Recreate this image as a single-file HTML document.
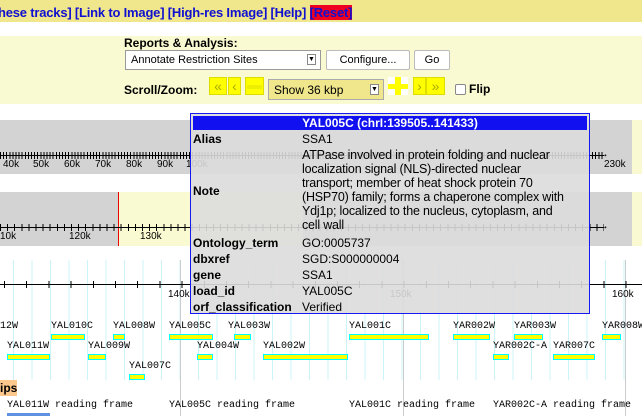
<!DOCTYPE html>
<html><head><meta charset="utf-8"><style>
*{margin:0;padding:0;box-sizing:border-box}
body{width:642px;height:416px;overflow:hidden;position:relative;background:#fff;font-family:"Liberation Sans",sans-serif;font-size:12px}
.a{position:absolute;white-space:nowrap}
.m{font-family:"Liberation Mono",monospace;font-size:10px;color:#000}
.bar{position:absolute;height:6px;background:#ff0;border:1px solid #0ff}
.btn{position:absolute;background:#ff0;border:1px solid #dd0;color:#cc0;font-size:14px;text-align:center;line-height:20px}
</style></head><body>
<div class="a" style="left:0;top:0;width:642px;height:22px;background:#f0e68c"></div>
<div class="a" style="left:-2px;top:5px;color:#1010d0;font-size:13px;font-weight:bold;letter-spacing:-0.2px">hese tracks] [Link to Image] [High-res Image] [Help] <span style="background:#f00020;color:#1010d0">[Reset]</span></div>
<div class="a" style="left:0;top:36px;width:642px;height:68px;background:#fafad2"></div>
<div class="a" style="left:124px;top:36px;font-weight:bold;font-size:12px">Reports &amp; Analysis:</div>
<div class="a" style="left:125px;top:50px;width:196px;height:20px;background:#fff;border:1px solid #999;font-size:11px;padding:3px 5px">Annotate Restriction Sites<span style="position:absolute;right:4px;top:3px;width:9px;height:11px;border:1px solid #888;font-size:7px;line-height:10px;text-align:center">▼</span></div>
<div class="a" style="left:326px;top:50px;width:84px;height:20px;background:#fff;border:1px solid #bbb;border-radius:2px;font-size:11px;text-align:center;line-height:18px">Configure...</div>
<div class="a" style="left:414px;top:50px;width:36px;height:20px;background:#fff;border:1px solid #bbb;border-radius:2px;font-size:11px;text-align:center;line-height:18px">Go</div>
<div class="a" style="left:124px;top:83px;font-weight:bold;font-size:12px">Scroll/Zoom:</div>
<div class="btn" style="left:209px;top:77px;width:18px;height:18px;color:#aa0;line-height:16px">«</div>
<div class="btn" style="left:228px;top:77px;width:13px;height:18px;color:#aa0;line-height:16px">‹</div>
<div class="btn" style="left:245px;top:77px;width:19px;height:18px"><div style="margin:7px 1px 0;height:4px;background:#ee0"></div></div>
<div class="a" style="left:268px;top:79px;width:116px;height:21px;background:#f0e68c;border:1px solid #aaa;font-size:12px;padding:3px 5px">Show 36 kbp<span style="position:absolute;right:4px;top:4px;width:9px;height:11px;border:1px solid #888;background:#fff;font-size:7px;line-height:10px;text-align:center">▼</span></div>
<div class="btn" style="left:388px;top:77px;width:20px;height:18px;background:#fff;border:none"><div style="position:absolute;left:0;top:7px;width:20px;height:5px;background:#ff0"></div><div style="position:absolute;left:7px;top:0;width:6px;height:18px;background:#ff0"></div></div>
<div class="btn" style="left:413px;top:77px;width:13px;height:18px;color:#aa0;line-height:16px">›</div>
<div class="btn" style="left:426px;top:77px;width:19px;height:18px;color:#aa0;line-height:16px">»</div>
<div class="a" style="left:455px;top:84px;width:11px;height:11px;border:1px solid #888;border-radius:2px;background:#fff"></div>
<div class="a" style="left:469px;top:82px;font-weight:bold;font-size:12px">Flip</div>

<div class="a" style="left:0;top:120px;width:632px;height:54px;background:#d3d3d3"></div>
<div class="a" style="left:632px;top:120px;width:10px;height:54px;background:#fafad2"></div>
<div class="a" style="left:0;top:155px;width:604px;height:1px;background:#000"></div>
<div class="a" style="left:0;top:152px;width:604px;height:7px;background:repeating-linear-gradient(90deg,#000 0 1px,transparent 1px 3.1px)"></div>
<div class="a m" style="left:600px;top:149px;font-size:11px">→</div>
<div class="a" style="left:3px;top:159px;font-size:10px">40k</div>
<div class="a" style="left:33px;top:159px;font-size:10px">50k</div>
<div class="a" style="left:64px;top:159px;font-size:10px">60k</div>
<div class="a" style="left:95px;top:159px;font-size:10px">70k</div>
<div class="a" style="left:126px;top:159px;font-size:10px">80k</div>
<div class="a" style="left:157px;top:159px;font-size:10px">90k</div>
<div class="a" style="left:186px;top:159px;font-size:10px">100k</div>
<div class="a" style="left:604px;top:159px;font-size:10px">230k</div>

<div class="a" style="left:0;top:192px;width:632px;height:54px;background:#d3d3d3"></div>
<div class="a" style="left:118px;top:192px;width:185px;height:54px;background:#fafad2"></div>
<div class="a" style="left:632px;top:192px;width:10px;height:54px;background:#fafad2"></div>
<div class="a" style="left:118px;top:192px;width:1px;height:54px;background:#e00"></div>
<div class="a" style="left:0;top:227px;width:604px;height:1px;background:#000"></div>
<div class="a" style="left:0;top:224px;width:604px;height:7px;background:repeating-linear-gradient(90deg,#000 0 1px,transparent 1px 7.1px)"></div>
<div class="a m" style="left:600px;top:221px;font-size:11px">→</div>
<div class="a" style="left:0;top:231px;font-size:10px">10k</div>
<div class="a" style="left:69px;top:231px;font-size:10px">120k</div>
<div class="a" style="left:140px;top:231px;font-size:10px">130k</div>

<div class="a" style="left:0;top:260px;width:642px;height:120px;background:repeating-linear-gradient(90deg,transparent 0 13px,#ccf4f8 13px 14px,transparent 14px 18.5px)"></div>
<div class="a" style="left:180px;top:260px;width:1px;height:156px;background:#ccc"></div>
<div class="a" style="left:403px;top:260px;width:1px;height:156px;background:#ccc"></div>
<div class="a" style="left:625px;top:260px;width:1px;height:156px;background:#ccc"></div>
<div class="a" style="left:0;top:284px;width:642px;height:1px;background:#000"></div>
<div class="a" style="left:0;top:281px;width:642px;height:7px;background:repeating-linear-gradient(90deg,transparent 0 4px,#000 4px 5px,transparent 5px 22.2px)"></div>
<div class="a" style="left:168px;top:289px;font-size:10px">140k</div>
<div class="a" style="left:390px;top:289px;font-size:10px">150k</div>
<div class="a" style="left:612px;top:289px;font-size:10px">160k</div>

<div class="a m" style="left:0;top:321px">12W</div>
<div class="a m" style="left:51px;top:321px">YAL010C</div><div class="bar" style="left:51px;top:334px;width:34px"></div>
<div class="a m" style="left:113px;top:321px">YAL008W</div><div class="bar" style="left:113px;top:334px;width:12px"></div>
<div class="a m" style="left:169px;top:321px">YAL005C</div><div class="bar" style="left:169px;top:334px;width:44px"></div>
<div class="a m" style="left:228px;top:321px">YAL003W</div><div class="bar" style="left:234px;top:334px;width:17px"></div>
<div class="a m" style="left:349px;top:321px">YAL001C</div><div class="bar" style="left:349px;top:334px;width:80px"></div>
<div class="a m" style="left:453px;top:321px">YAR002W</div><div class="bar" style="left:453px;top:334px;width:37px"></div>
<div class="a m" style="left:514px;top:321px">YAR003W</div><div class="bar" style="left:514px;top:334px;width:29px"></div>
<div class="a m" style="left:602px;top:321px">YAR008W</div><div class="bar" style="left:602px;top:334px;width:19px"></div>

<div class="a m" style="left:7px;top:341px">YAL011W</div><div class="bar" style="left:7px;top:354px;width:43px"></div>
<div class="a m" style="left:88px;top:341px">YAL009W</div><div class="bar" style="left:88px;top:354px;width:18px"></div>
<div class="a m" style="left:197px;top:341px">YAL004W</div><div class="bar" style="left:197px;top:354px;width:16px"></div>
<div class="a m" style="left:263px;top:341px">YAL002W</div><div class="bar" style="left:263px;top:354px;width:85px"></div>
<div class="a m" style="left:493px;top:341px">YAR002C-A</div><div class="bar" style="left:493px;top:354px;width:16px"></div>
<div class="a m" style="left:553px;top:341px">YAR007C</div><div class="bar" style="left:553px;top:354px;width:42px"></div>
<div class="a m" style="left:129px;top:361px">YAL007C</div><div class="bar" style="left:129px;top:374px;width:16px"></div>

<div class="a" style="left:0;top:380px;width:17px;height:16px;background:#fcc88c;font-weight:bold;font-size:12px;line-height:16px">ips</div>
<div class="a m" style="left:7px;top:400px">YAL011W reading frame</div>
<div class="a m" style="left:169px;top:400px">YAL005C reading frame</div>
<div class="a m" style="left:349px;top:400px">YAL001C reading frame</div>
<div class="a m" style="left:493px;top:400px">YAR002C-A reading frame</div>
<div class="a" style="left:7px;top:413px;width:43px;height:3px;background:#6090e0"></div>

<div class="a" style="left:190px;top:113px;width:400px;height:201px;background:rgba(220,220,220,0.9);border:1px solid #1818f0">
<div style="position:absolute;left:2px;top:2px;width:394px;height:14px;background:#1010f0;color:#fff;font-weight:bold;font-size:12px;text-align:center;line-height:14px">YAL005C (chrI:139505..141433)</div>
<div class="a" style="left:2px;top:18px;font-weight:bold">Alias</div><div class="a" style="left:111px;top:18px">SSA1</div>
<div class="a" style="left:2px;top:70px;font-weight:bold">Note</div>
<div class="a" style="left:111px;top:34px;line-height:14px;font-size:12.5px;letter-spacing:-0.2px">ATPase involved in protein folding and nuclear<br>localization signal (NLS)-directed nuclear<br>transport; member of heat shock protein 70<br>(HSP70) family; forms a chaperone complex with<br>Ydj1p; localized to the nucleus, cytoplasm, and<br>cell wall</div>
<div class="a" style="left:2px;top:122px;font-weight:bold">Ontology_term</div><div class="a" style="left:111px;top:122px">GO:0005737</div>
<div class="a" style="left:2px;top:138px;font-weight:bold">dbxref</div><div class="a" style="left:111px;top:138px">SGD:S000000004</div>
<div class="a" style="left:2px;top:154px;font-weight:bold">gene</div><div class="a" style="left:111px;top:154px">SSA1</div>
<div class="a" style="left:2px;top:170px;font-weight:bold">load_id</div><div class="a" style="left:111px;top:170px">YAL005C</div>
<div class="a" style="left:2px;top:186px;font-weight:bold">orf_classification</div><div class="a" style="left:111px;top:186px">Verified</div>
</div>
</body></html>
